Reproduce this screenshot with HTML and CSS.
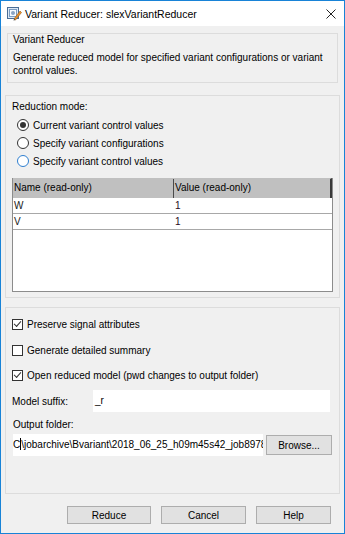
FILE: index.html
```html
<!DOCTYPE html>
<html lang="en">
<head>
  <meta charset="UTF-8">
  <title>Variant Reducer: slexVariantReducer</title>
  <link rel="stylesheet" href="styles.css">
</head>
<body>
  <div class="window">
    <div class="titlebar">
      <svg class="app-icon" width="15" height="15" viewBox="0 0 15 15">
        <rect x="0.5" y="1.5" width="11" height="11" fill="#dbe8f5" stroke="#4a6d96"/>
        <rect x="2.5" y="3.5" width="7" height="7" fill="#f7fbff" stroke="#7c9cc1"/>
        <circle cx="6" cy="7" r="2" fill="#8aa4c4"/>
        <path d="M7 13 L13 5 L14.5 6.5 L8.5 14 Z" fill="#e8912d" stroke="#9b5a12" stroke-width="0.6"/>
        <path d="M7 13 L8.5 14 L6.5 14.5 Z" fill="#333"/>
      </svg>
      <span class="title">Variant Reducer: slexVariantReducer</span>
      <svg class="close" width="10" height="10" viewBox="0 0 10 10">
        <path d="M0.5 0.5 L9.5 9.5 M9.5 0.5 L0.5 9.5" stroke="#222" stroke-width="1"/>
      </svg>
    </div>

    <div class="content">
      <div class="group intro">
        <div class="group-title">Variant Reducer</div>
        <p class="desc">Generate reduced model for specified variant configurations or variant control values.</p>
      </div>

      <div class="group mode">
        <div class="label">Reduction mode:</div>
        <div class="radio-row"><span class="radio checked"></span>Current variant control values</div>
        <div class="radio-row"><span class="radio"></span>Specify variant configurations</div>
        <div class="radio-row"><span class="radio focus"></span>Specify variant control values</div>

        <div class="table">
          <div class="thead">
            <div class="th">Name (read-only)</div>
            <div class="th">Value (read-only)</div>
          </div>
          <div class="tr">
            <div class="td">W</div>
            <div class="td val">1</div>
          </div>
          <div class="tr">
            <div class="td">V</div>
            <div class="td val">1</div>
          </div>
        </div>
      </div>

      <div class="group options">
        <div class="check-row"><span class="check on"></span>Preserve signal attributes</div>
        <div class="check-row"><span class="check"></span>Generate detailed summary</div>
        <div class="check-row"><span class="check on"></span>Open reduced model (pwd changes to output folder)</div>

        <div class="suffix-row">
          <span class="field-label">Model suffix:</span>
          <div class="textbox suffix">_r</div>
        </div>

        <div class="label folder-label">Output folder:</div>
        <div class="folder-row">
          <div class="textbox folder">C<span class="caret"></span>\jobarchive\Bvariant\2018_06_25_h09m45s42_job8978</div>
          <button class="btn browse">Browse...</button>
        </div>
      </div>

      <div class="actions">
        <button class="btn reduce">Reduce</button>
        <button class="btn cancel">Cancel</button>
        <button class="btn help">Help</button>
      </div>
    </div>
  </div>
</body>
</html>
```

FILE: styles.css
```css
body {
  margin: 0;
  font-family: "Liberation Sans", Arial, sans-serif;
  font-size: 10px;
  color: #000;
}
.window {
  width: 345px;
  height: 534px;
  box-sizing: border-box;
  border: 1px solid #1883d7;
  display: flex;
  flex-direction: column;
  background: #f0f0f0;
}
.titlebar {
  height: 25px;
  background: #fff;
  display: flex;
  align-items: center;
  padding: 0 8px 0 6px;
}
.app-icon { margin-right: 3px; }
.title {
  font-size: 10.5px;
  flex: 1;
}
.close { margin-top: 1px; }

.content {
  flex: 1;
  display: flex;
  flex-direction: column;
}
.group {
  border: 1px solid #dcdcdc;
  box-sizing: border-box;
}
.intro {
  margin: 7px 6px 0 6px;
  height: 50px;
  padding: 1px 5px 0 5px;
}
.group-title { line-height: 10px; }
.desc {
  margin: 6px 0 0 0;
  line-height: 13px;
}

.mode {
  margin: 12px 4px 0 4px;
  height: 203px;
  padding: 4px 6px 0 6px;
}
.label { line-height: 14px; }
.radio-row {
  display: flex;
  align-items: center;
  height: 18px;
  padding-left: 5px;
}
.mode .label + .radio-row { margin-top: 2px; }
.radio {
  width: 10px;
  height: 10px;
  border: 1px solid #333;
  border-radius: 50%;
  background: #fff;
  margin-right: 4px;
  display: flex;
  align-items: center;
  justify-content: center;
}
.radio.checked::after {
  content: "";
  width: 6px;
  height: 6px;
  border-radius: 50%;
  background: #333;
}
.radio.focus { border-color: #2f7fd0; }

.table {
  margin-top: 8px;
  height: 114px;
  border: 1px solid #8c8c8c;
  border-top: none;
  background: #fff;
  box-sizing: border-box;
}
.thead {
  display: grid;
  grid-template-columns: 160px 1fr;
  background: #c0c0c0;
  height: 20px;
  border-right: 2px solid #3a3a3a;
  border-top: 1px solid #c0c0c0;
  box-sizing: border-box;
}
.th {
  line-height: 18px;
  padding-left: 1px;
}
.th + .th { border-left: 1px solid #4a4a4a; }
.tr {
  display: grid;
  grid-template-columns: 160px 1fr;
  height: 16px;
  border-bottom: 1px solid #a8a8a8;
  box-sizing: border-box;
}
.td {
  line-height: 15px;
  padding-left: 1px;
  color: #1a1a1a;
}
.td.val {
  padding-left: 2px;
  color: #2a0a22;
}

.options {
  margin: 9px 4px 0 4px;
  height: 187px;
  padding: 8px 6px 0 6px;
}
.check-row {
  display: flex;
  align-items: center;
  height: 16px;
  margin-bottom: 10px;
}
.check-row:nth-child(2) { margin-bottom: 9px; }
.check {
  width: 9px;
  height: 9px;
  border: 1px solid #333;
  background: #fff;
  margin-right: 4px;
  position: relative;
}
.check.on::after {
  content: "";
  position: absolute;
  left: 1px;
  top: 0px;
  width: 6px;
  height: 3px;
  border-left: 1px solid #333;
  border-bottom: 1px solid #333;
  transform: translate(0, 1px) rotate(-48deg);
  transform-origin: center;
}
.suffix-row {
  display: flex;
  align-items: center;
  height: 22px;
  margin-top: -3px;
}
.field-label { width: 81px; }
.textbox {
  background: #fff;
  height: 22px;
  line-height: 22px;
  box-sizing: border-box;
  white-space: nowrap;
  overflow: hidden;
}
.suffix {
  flex: 1;
  margin-right: 3px;
  padding-left: 2px;
}
.folder-label {
  margin-top: 6px;
  padding-left: 1px;
}
.folder-row {
  display: flex;
  align-items: center;
  margin-top: 2px;
  padding-left: 1px;
}
.folder {
  width: 250px;
  padding-left: 0;
}
.caret {
  display: inline-block;
  width: 1px;
  height: 12px;
  background: #000;
  vertical-align: -2px;
}
.btn {
  font-family: "Liberation Sans", Arial, sans-serif;
  font-size: 10px;
  color: #000;
  background: #e1e1e1;
  border: 1px solid #adadad;
  padding: 0;
  height: 20px;
  box-sizing: border-box;
}
.browse {
  width: 66px;
  margin-left: 3px;
}
.actions {
  display: flex;
  justify-content: flex-end;
  gap: 10px;
  padding-right: 13px;
  margin-top: 12px;
}
.actions .btn { height: 18px; }
.reduce { width: 84px; }
.cancel { width: 85px; }
.help { width: 75px; }
```
